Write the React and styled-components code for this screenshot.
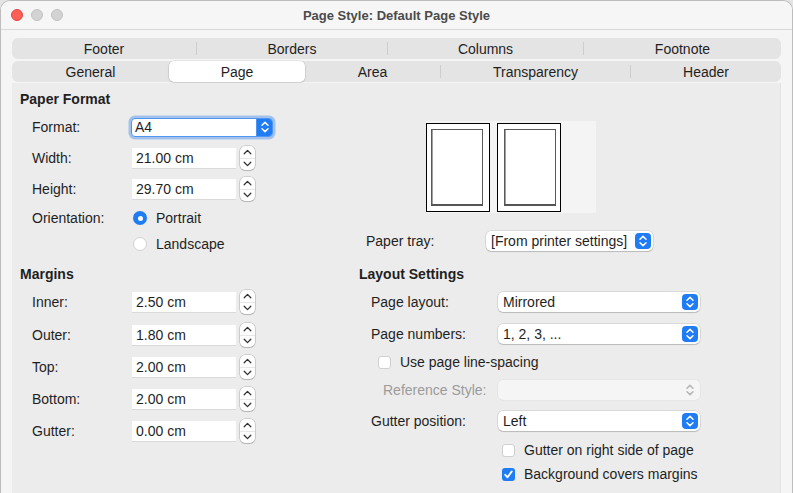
import React from "react";
import styled, { createGlobalStyle } from "styled-components";

const GlobalStyle = createGlobalStyle`
  html, body {
    margin: 0;
    padding: 0;
    background: #e4e4e4;
    overflow: hidden;
  }
  body {
    font-family: "Liberation Sans", Arial, sans-serif;
    font-size: 14px;
    color: #1f1f1f;
  }
`;

const Window = styled.div`
  box-sizing: border-box;
  width: 793px;
  height: 493px;
  display: flex;
  flex-direction: column;
  background: #f5f5f5;
  border: 1px solid #bdbdbd;
  border-bottom: none;
  border-radius: 10px 10px 0 0;
  overflow: hidden;
`;

const TitleBar = styled.div`
  height: 28px;
  flex: 0 0 28px;
  display: grid;
  grid-template-columns: 1fr auto 1fr;
  align-items: center;
  background: #f6f6f6;
  border-bottom: 1px solid #d9d9d9;
`;

const Lights = styled.div`
  display: flex;
  gap: 8px;
  padding-left: 10px;
`;

const Light = styled.span`
  width: 12px;
  height: 12px;
  box-sizing: border-box;
  border-radius: 50%;
  background: ${(p) => (p.$red ? "#fe5f57" : "#d3d3d3")};
  border: 1px solid ${(p) => (p.$red ? "#e2463f" : "#c2c2c2")};
`;

const Title = styled.div`
  font-size: 13px;
  font-weight: bold;
  color: #4b4b4b;
`;

const Body = styled.div`
  flex: 1;
  display: flex;
  flex-direction: column;
  padding: 8px 11px 0 11px;
  min-height: 0;
`;

const TabRow = styled.div`
  display: flex;
  align-items: center;
  height: 21px;
  background: #e4e4e4;
  border-radius: 6px;
  margin-bottom: ${(p) => p.$mb || 0}px;
`;

const Tab = styled.div`
  flex: 0 0 ${(p) => p.$w}px;
  height: 21px;
  display: flex;
  align-items: center;
  justify-content: center;
  box-sizing: border-box;
  border-radius: 5px;
  background: ${(p) => (p.$active ? "#ffffff" : "transparent")};
  box-shadow: ${(p) =>
    p.$active ? "0 0 0 0.5px rgba(0,0,0,0.12), 0 1px 2px rgba(0,0,0,0.12)" : "none"};
`;

const TabSep = styled.span`
  flex: 0 0 1px;
  height: 13px;
  background: #cdcdcd;
`;

const Panel = styled.div`
  flex: 1;
  margin-top: 1px;
  background: #ececec;
  border-right: 1px solid #e2e2e2;
  display: grid;
  grid-template-columns: 339px 1fr;
  padding: 5px 0 0 8px;
  align-items: start;
`;

const Column = styled.div`
  display: flex;
  flex-direction: column;
`;

const Row = styled.div`
  display: flex;
  align-items: center;
  height: 22px;
  margin-top: ${(p) => p.$mt || 0}px;
`;

const Heading = styled.div`
  font-weight: bold;
`;

const Label = styled.div`
  box-sizing: border-box;
  flex: 0 0 ${(p) => p.$w}px;
  padding-left: ${(p) => p.$indent}px;
  color: ${(p) => (p.$disabled ? "#9b9b9b" : "#1f1f1f")};
  white-space: nowrap;
`;

const FocusSelect = styled.div`
  box-sizing: border-box;
  width: 142px;
  height: 19px;
  margin-left: -1px;
  display: flex;
  align-items: stretch;
  background: #fff;
  border: 1px solid #4f94ee;
  border-radius: 4px;
  box-shadow: 0 0 0 2.5px rgba(74, 144, 236, 0.45);
  overflow: hidden;
`;

const SelectText = styled.div`
  flex: 1;
  display: flex;
  align-items: center;
  padding-left: ${(p) => p.$pad || 5}px;
  white-space: nowrap;
`;

const FocusArrow = styled.div`
  flex: 0 0 15px;
  display: flex;
  align-items: center;
  justify-content: center;
  background: #1f7cf4;
  border-left: 1px solid #4f94ee;
`;

const SpinField = styled.div`
  box-sizing: border-box;
  width: 104px;
  height: 20px;
  display: flex;
  align-items: center;
  padding-left: 4px;
  background: #fff;
  box-shadow: 0 1px 0 rgba(0, 0, 0, 0.08);
`;

const SpinBtn = styled.div`
  box-sizing: border-box;
  width: 15px;
  height: 24px;
  margin-left: 4px;
  display: flex;
  flex-direction: column;
  background: #fff;
  border-radius: 5px;
  box-shadow: 0 0 0 0.5px rgba(0, 0, 0, 0.25), 0 1px 1px rgba(0, 0, 0, 0.12);
`;

const SpinHalf = styled.div`
  flex: 1;
  display: flex;
  align-items: center;
  justify-content: center;
  border-top: ${(p) => (p.$bottom ? "1px solid #e6e6e6" : "none")};
`;

const Radio = styled.span`
  box-sizing: border-box;
  width: 14px;
  height: 14px;
  margin-left: 1px;
  border-radius: 50%;
  display: flex;
  align-items: center;
  justify-content: center;
  background: ${(p) => (p.$on ? "#1f7cf4" : "#fff")};
  border: ${(p) => (p.$on ? "none" : "1px solid #d2d2d2")};
  &::after {
    content: "";
    width: 5px;
    height: 5px;
    border-radius: 50%;
    background: ${(p) => (p.$on ? "#fff" : "transparent")};
  }
`;

const Check = styled.span`
  box-sizing: border-box;
  flex: 0 0 13px;
  width: 13px;
  height: 13px;
  margin-left: ${(p) => p.$ml || 0}px;
  border-radius: 3px;
  display: flex;
  align-items: center;
  justify-content: center;
  background: ${(p) => (p.$on ? "#1f7cf4" : "#fff")};
  border: ${(p) => (p.$on ? "none" : "1px solid #d0d0d0")};
`;

const OptionText = styled.span`
  margin-left: 9px;
  white-space: nowrap;
`;

const Select = styled.div`
  box-sizing: border-box;
  width: ${(p) => p.$w}px;
  height: 20px;
  display: flex;
  align-items: center;
  border-radius: 5px;
  background: ${(p) => (p.$disabled ? "#f5f5f5" : "#fff")};
  box-shadow: ${(p) =>
    p.$disabled
      ? "0 0 0 0.5px rgba(0,0,0,0.06)"
      : "0 0 0 0.5px rgba(0,0,0,0.16), 0 1px 1px rgba(0,0,0,0.14)"};
`;

const SelectArrow = styled.div`
  flex: 0 0 16px;
  height: 16px;
  margin-right: 2px;
  border-radius: 4px;
  display: flex;
  align-items: center;
  justify-content: center;
  background: ${(p) => (p.$disabled ? "transparent" : "#1f7cf4")};
`;

const Preview = styled.div`
  box-sizing: border-box;
  width: 170px;
  height: 92px;
  margin: 33px 0 0 67px;
  padding-top: 2px;
  display: flex;
  gap: 7px;
  background: #f4f4f4;
`;

const Chevrons = ({ color = "#fff" }) => (
  <svg width="10" height="14" viewBox="0 0 10 14">
    <path
      d="M2 5.2 L5 2.4 L8 5.2 M2 8.8 L5 11.6 L8 8.8"
      fill="none"
      stroke={color}
      strokeWidth="1.5"
      strokeLinecap="round"
      strokeLinejoin="round"
    />
  </svg>
);

const Chev = ({ up }) => (
  <svg width="9" height="6" viewBox="0 0 9 6">
    <path
      d={up ? "M1.2 4.8 L4.5 1.4 L7.8 4.8" : "M1.2 1.2 L4.5 4.6 L7.8 1.2"}
      fill="none"
      stroke="#333"
      strokeWidth="1.3"
      strokeLinecap="round"
      strokeLinejoin="round"
    />
  </svg>
);

const Tick = () => (
  <svg width="11" height="11" viewBox="0 0 11 11">
    <path
      d="M2.3 5.8 L4.5 8.3 L8.8 2.4"
      fill="none"
      stroke="#fff"
      strokeWidth="1.8"
      strokeLinecap="round"
      strokeLinejoin="round"
    />
  </svg>
);

const PagePic = ({ mirror }) => {
  const x = mirror ? 7 : 5;
  return (
    <svg width="64" height="89" viewBox="0 0 64 89">
      <rect x="0.5" y="0.5" width="63" height="88" fill="#fff" stroke="#000" />
      <rect x={x + 0.5} y="6.5" width="51" height="75" fill="#fff" stroke="#5a5a5a" />
      <line x1={x + 1.5} y1="7" x2={x + 1.5} y2="81" stroke="#a0a0a0" />
      <rect x={x} y="81" width="52" height="2" fill="#555" />
    </svg>
  );
};

const Spin = ({ value }) => (
  <>
    <SpinField>{value}</SpinField>
    <SpinBtn>
      <SpinHalf>
        <Chev up />
      </SpinHalf>
      <SpinHalf $bottom>
        <Chev />
      </SpinHalf>
    </SpinBtn>
  </>
);

const PopUp = ({ w, value, disabled }) => (
  <Select $w={w} $disabled={disabled}>
    <SelectText>{value}</SelectText>
    <SelectArrow $disabled={disabled}>
      <Chevrons color={disabled ? "#b5b5b5" : "#fff"} />
    </SelectArrow>
  </Select>
);

const margins = [
  ["Inner:", "2.50 cm", 6],
  ["Outer:", "1.80 cm", 11],
  ["Top:", "2.00 cm", 10],
  ["Bottom:", "2.00 cm", 10],
  ["Gutter:", "0.00 cm", 10],
];

export default function App() {
  return (
    <>
      <GlobalStyle />
      <Window>
        <TitleBar>
          <Lights>
            <Light $red />
            <Light />
            <Light />
          </Lights>
          <Title>Page Style: Default Page Style</Title>
          <div />
        </TitleBar>
        <Body>
          <TabRow $mb={2}>
            <Tab $w={184}>Footer</Tab>
            <TabSep />
            <Tab $w={190}>Borders</Tab>
            <TabSep />
            <Tab $w={195}>Columns</Tab>
            <TabSep />
            <Tab $w={197}>Footnote</Tab>
          </TabRow>
          <TabRow>
            <Tab $w={157}>General</Tab>
            <Tab $w={136} $active>
              Page
            </Tab>
            <Tab $w={135}>Area</Tab>
            <TabSep />
            <Tab $w={189}>Transparency</Tab>
            <TabSep />
            <Tab $w={150}>Header</Tab>
          </TabRow>
          <Panel>
            <Column>
              <Row>
                <Heading>Paper Format</Heading>
              </Row>
              <Row $mt={6}>
                <Label $w={112} $indent={12}>Format:</Label>
                <FocusSelect>
                  <SelectText $pad={3}>A4</SelectText>
                  <FocusArrow>
                    <Chevrons />
                  </FocusArrow>
                </FocusSelect>
              </Row>
              <Row $mt={9}>
                <Label $w={112} $indent={12}>Width:</Label>
                <Spin value="21.00 cm" />
              </Row>
              <Row $mt={9}>
                <Label $w={112} $indent={12}>Height:</Label>
                <Spin value="29.70 cm" />
              </Row>
              <Row $mt={7}>
                <Label $w={112} $indent={12}>Orientation:</Label>
                <Radio $on />
                <OptionText>Portrait</OptionText>
              </Row>
              <Row $mt={4}>
                <Label $w={112} $indent={12} />
                <Radio />
                <OptionText>Landscape</OptionText>
              </Row>
              <Row $mt={8}>
                <Heading>Margins</Heading>
              </Row>
              {margins.map(([label, value, mt]) => (
                <Row key={label} $mt={mt}>
                  <Label $w={112} $indent={12}>{label}</Label>
                  <Spin value={value} />
                </Row>
              ))}
            </Column>
            <Column>
              <Preview>
                <PagePic />
                <PagePic mirror />
              </Preview>
              <Row $mt={17}>
                <Label $w={127} $indent={7}>Paper tray:</Label>
                <PopUp w={167} value="[From printer settings]" />
              </Row>
              <Row $mt={11}>
                <Heading>Layout Settings</Heading>
              </Row>
              <Row $mt={6}>
                <Label $w={139} $indent={12}>Page layout:</Label>
                <PopUp w={202} value="Mirrored" />
              </Row>
              <Row $mt={10}>
                <Label $w={139} $indent={12}>Page numbers:</Label>
                <PopUp w={202} value="1, 2, 3, ..." />
              </Row>
              <Row $mt={6}>
                <Check $ml={19} />
                <OptionText>Use page line-spacing</OptionText>
              </Row>
              <Row $mt={6}>
                <Label $w={139} $indent={24} $disabled>
                  Reference Style:
                </Label>
                <PopUp w={202} value="" disabled />
              </Row>
              <Row $mt={9}>
                <Label $w={139} $indent={12}>Gutter position:</Label>
                <PopUp w={202} value="Left" />
              </Row>
              <Row $mt={7}>
                <Check $ml={143} />
                <OptionText>Gutter on right side of page</OptionText>
              </Row>
              <Row $mt={2}>
                <Check $ml={143} $on>
                  <Tick />
                </Check>
                <OptionText>Background covers margins</OptionText>
              </Row>
            </Column>
          </Panel>
        </Body>
      </Window>
    </>
  );
}
